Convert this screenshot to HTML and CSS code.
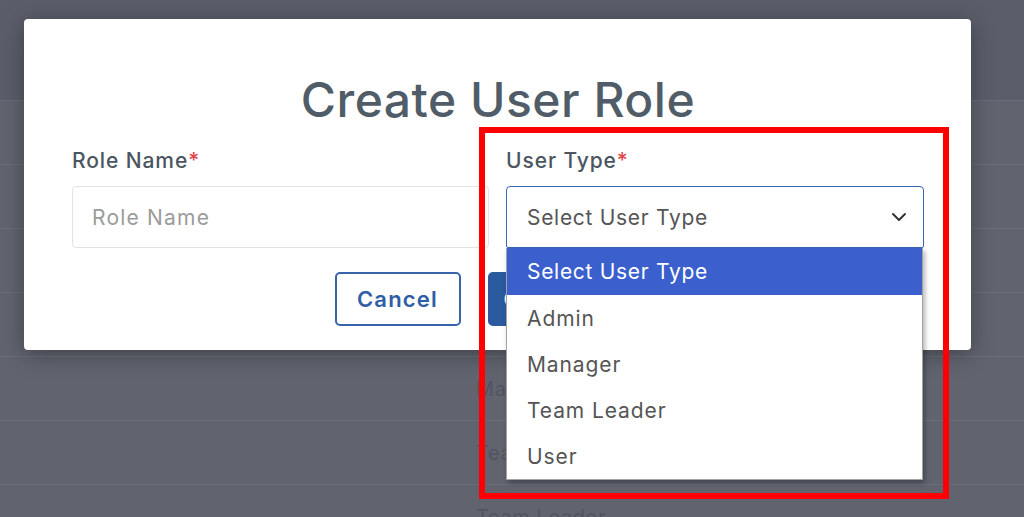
FILE: index.html
```html
<!DOCTYPE html>
<html lang="en">
<head>
    <meta charset="UTF-8">
    <meta name="viewport" content="width=device-width, initial-scale=1.0">
    <title>User Roles</title>
    <link rel="stylesheet" href="styles.css">
</head>
<body>

    <!-- page behind the modal -->
    <div class="page">
        <div class="page-header"></div>
        <div class="row"><span>Super Admin</span></div>
        <div class="row"><span>Admin</span></div>
        <div class="row"><span>Admin</span></div>
        <div class="row"><span>Manager</span></div>
        <div class="row"><span>Manager</span></div>
        <div class="row"><span>Team Leader</span></div>
        <div class="row"><span>Team Leader</span></div>
    </div>

    <div class="overlay">
        <div class="modal">
            <h1>Create User Role</h1>
            <form class="form-grid">
                <div class="field">
                    <label>Role Name<span class="req">*</span></label>
                    <div class="input placeholder">Role Name</div>
                </div>
                <div class="field">
                    <label>User Type<span class="req">*</span></label>
                    <div class="select-wrap">
                        <div class="input select focused">
                            <span>Select User Type</span>
                            <svg class="chevron" width="16" height="10" viewBox="0 0 16 10">
                                <path d="M2 2 L8 8 L14 2" fill="none" stroke="#333" stroke-width="2" stroke-linecap="round" stroke-linejoin="round"/>
                            </svg>
                        </div>
                        <ul class="options">
                            <li class="active">Select User Type</li>
                            <li>Admin</li>
                            <li>Manager</li>
                            <li>Team Leader</li>
                            <li>User</li>
                        </ul>
                    </div>
                </div>
            </form>
            <div class="actions">
                <button class="btn btn-outline" type="button">Cancel</button>
                <button class="btn btn-primary" type="button">Create Role</button>
            </div>
        </div>
    </div>

    <!-- annotation -->
    <div class="highlight-box"></div>

</body>
</html>
```

FILE: styles.css
```css
* {
    box-sizing: border-box;
}

body {
    margin: 0;
    padding: 0;
    width: 1024px;
    height: 517px;
    overflow: hidden;
    font-family: Inter, "Open Sans", Arial, sans-serif;
    background-color: #61646f;
    position: relative;
}

/* background page (already dimmed) */
.page {
    height: 517px;
    overflow: hidden;
}

.page-header {
    height: 100px;
    background-color: #5b5e6a;
}

.row {
    height: 64px;
    border-top: 1px solid #6a6d79;
    padding-left: 476px;
    display: flex;
    align-items: center;
    font-size: 20px;
    letter-spacing: 0.6px;
    color: #51545f;
}

.overlay {
    position: absolute;
    top: 0;
    left: 0;
    right: 0;
    bottom: 0;
}

.modal {
    position: absolute;
    top: 19px;
    left: 24px;
    width: 947px;
    height: 331px;
    background-color: white;
    border-radius: 4px;
    box-shadow: 0 4px 22px rgba(0, 0, 0, 0.35);
    padding: 53px 47px 24px 48px;
}

h1 {
    margin: 0;
    font-size: 48px;
    line-height: 56px;
    font-weight: 500;
    letter-spacing: 0.5px;
    text-align: center;
    color: #505d68;
}

.form-grid {
    display: grid;
    grid-template-columns: 417px 418px;
    column-gap: 17px;
    margin-top: 20px;
}

.field label {
    display: block;
    font-size: 21px;
    line-height: 26px;
    font-weight: 500;
    letter-spacing: 0.9px;
    color: #4b5661;
    margin-bottom: 12px;
}

.req {
    color: #e0474c;
}

.input {
    height: 62px;
    border: 1px solid #e3e3e3;
    border-radius: 4px;
    padding: 0 19px;
    display: flex;
    align-items: center;
    font-size: 21px;
    letter-spacing: 0.7px;
    color: #555;
}

.placeholder {
    color: #9b9b9b;
    letter-spacing: 1.2px;
}

.select-wrap {
    position: relative;
}

.select {
    justify-content: space-between;
    padding-left: 20px;
    padding-right: 16px;
    color: #555;
}

.select.focused {
    border-color: #3b66b3;
    border-radius: 4px 4px 2px 2px;
}

.options {
    position: absolute;
    top: 62px;
    left: 0;
    width: 417px;
    margin: 0;
    padding: 0;
    list-style: none;
    background-color: white;
    border: 1px solid #a3a3a3;
    border-top: none;
    box-shadow: 2px 3px 5px rgba(0, 0, 0, 0.3);
    z-index: 5;
}

.options li {
    height: 46px;
    padding-left: 20px;
    display: flex;
    align-items: center;
    font-size: 21px;
    letter-spacing: 0.9px;
    color: #555;
}

.options li.active {
    height: 47px;
    background-color: #3b5fcd;
    color: white;
    letter-spacing: 0.7px;
}

.actions {
    display: flex;
    justify-content: center;
    gap: 27px;
    margin-top: 24px;
}

.btn {
    height: 54px;
    border-radius: 5px;
    font-family: inherit;
    font-size: 22px;
    font-weight: 600;
    letter-spacing: 1.2px;
    padding: 0 14px;
}

.btn-outline {
    width: 126px;
    background-color: white;
    border: 2px solid #3a64aa;
    color: #2f5ea6;
    text-align: center;
}

.btn-primary {
    width: 174px;
    background-color: #2b5a9e;
    border: 2px solid #2b5a9e;
    color: white;
    text-align: left;
}

.highlight-box {
    position: absolute;
    left: 479px;
    top: 127px;
    width: 470px;
    height: 372px;
    border: 6px solid #ff0000;
    z-index: 10;
}
```
